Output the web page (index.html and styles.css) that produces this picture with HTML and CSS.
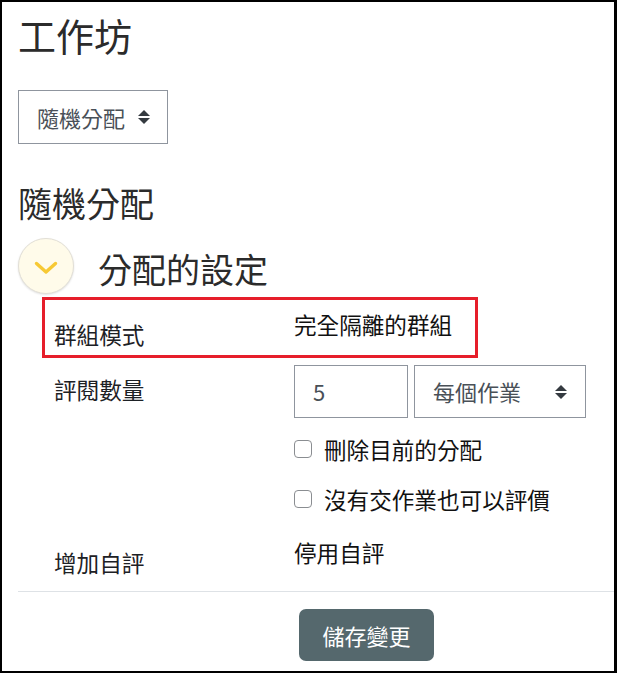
FILE: index.html
```html
<!DOCTYPE html>
<html lang="zh-Hant">
<head>
<meta charset="utf-8">
<title>工作坊</title>
<link rel="stylesheet" href="styles.css">
</head>
<body>
<div class="page">
  <h1 class="title">工作坊</h1>
  <div class="jump">
    <span class="select select-jump">隨機分配<svg class="updown" width="12" height="16" viewBox="0 0 12 16"><polygon points="0,7 6,1 12,7"/><polygon points="0,9 6,15 12,9"/></svg></span>
  </div>
  <h2 class="heading">隨機分配</h2>
  <div class="section-head">
    <span class="toggle"><svg width="24" height="14" viewBox="0 0 24 14"><polyline points="2.5,2.5 12,11 21.5,2.5" fill="none" stroke="#f7c934" stroke-width="3.4" stroke-linecap="round" stroke-linejoin="round"/></svg></span>
    <h3 class="section-title">分配的設定</h3>
  </div>
  <div class="row row-group">
    <div class="label">群組模式</div>
    <div class="value">完全隔離的群組</div>
  </div>
  <div class="row row-count">
    <div class="label">評閱數量</div>
    <div class="controls">
      <span class="field">5</span>
      <span class="select select-per">每個作業<svg class="updown" width="12" height="16" viewBox="0 0 12 16"><polygon points="0,7 6,1 12,7"/><polygon points="0,9 6,15 12,9"/></svg></span>
    </div>
  </div>
  <div class="row row-check">
    <div class="label"></div>
    <label class="check"><span class="box"></span>刪除目前的分配</label>
  </div>
  <div class="row row-check">
    <div class="label"></div>
    <label class="check"><span class="box"></span>沒有交作業也可以評價</label>
  </div>
  <div class="row row-self">
    <div class="label">增加自評</div>
    <div class="value">停用自評</div>
  </div>
  <div class="actions">
    <button class="btn">儲存變更</button>
  </div>
</div>
</body>
</html>
```

FILE: styles.css
```css
html, body {
  margin: 0;
  padding: 0;
  background: #fff;
}

.page {
  width: 617px;
  height: 673px;
  box-sizing: border-box;
  border: 2px solid #000;
  border-right-width: 3px;
  padding: 0 0 0 16px;
  overflow: hidden;
  font-family: "Noto Sans CJK TC", "Noto Sans", sans-serif;
  color: #1d2125;
  font-size: 22.6px;
  line-height: 33px;
}

.title {
  margin: 10px 0 0;
  font-size: 38px;
  line-height: 46px;
  font-weight: 400;
  color: #2b2b2b;
}

.jump {
  margin-top: 32px;
  display: flex;
}

.select {
  display: flex;
  align-items: center;
  box-sizing: border-box;
  border: 1px solid #8f959e;
  color: #495057;
  font-size: 22px;
}

.select-jump {
  width: 150px;
  height: 54px;
  padding-left: 18px;
  gap: 13px;
}

.updown {
  fill: #343a40;
  flex: none;
}

.heading {
  margin: 39px 0 0;
  font-size: 34px;
  line-height: 40px;
  font-weight: 400;
  color: #2b2b2b;
}

.section-head {
  margin-top: 14px;
  display: flex;
  align-items: center;
  gap: 24px;
  height: 57px;
}

.toggle {
  width: 56px;
  height: 56px;
  box-sizing: border-box;
  border-radius: 50%;
  background: #fffbea;
  border: 1px solid #e2dfd6;
  box-shadow: 0 1px 2px rgba(0, 0, 0, 0.12);
  display: flex;
  align-items: center;
  justify-content: center;
  padding-top: 5px;
  flex: none;
}

.section-title {
  margin: 0;
  padding-top: 6px;
  font-size: 34px;
  line-height: 40px;
  font-weight: 400;
  color: #2b2b2b;
}

.row {
  display: grid;
  grid-template-columns: 240px 1fr;
  padding-left: 36px;
}

.row-group {
  margin: 3px 0 0 24px;
  width: 436px;
  height: 61px;
  box-sizing: border-box;
  border: 3px solid #e61e2a;
  padding: 8px 0 0 9px;
}

.row-group .label {
  padding-top: 10px;
}

.value {
  color: #111;
}

.row-count {
  margin-top: 7px;
  height: 53px;
}

.row-count .label {
  padding-top: 8px;
}

.controls {
  display: flex;
  gap: 6px;
}

.field {
  box-sizing: border-box;
  width: 114px;
  height: 53px;
  border: 1px solid #8f959e;
  padding-left: 18px;
  display: flex;
  align-items: center;
  color: #495057;
  font-size: 22px;
}

.select-per {
  width: 172px;
  height: 53px;
  padding: 0 18px 0 18px;
  justify-content: space-between;
}

.row-check {
  height: 50px;
  align-items: center;
}

.row-count + .row-check {
  margin-top: 6px;
}

.check {
  display: flex;
  align-items: center;
  gap: 12px;
  color: #111;
}

.box {
  width: 18px;
  height: 18px;
  box-sizing: border-box;
  border: 1.5px solid #8a8d91;
  border-radius: 4px;
  background: #fff;
  flex: none;
}

.row-self {
  height: 68px;
  box-sizing: border-box;
  border-bottom: 1px solid #dee2e6;
}

.row-self .label {
  padding-top: 22px;
}

.row-self .value {
  padding-top: 12px;
}

.actions {
  padding: 17px 0 0 281px;
}

.btn {
  width: 135px;
  height: 52px;
  border: 0;
  border-radius: 7px;
  background: #55686d;
  color: #fff;
  font-family: "Noto Sans CJK TC", "Noto Sans", sans-serif;
  font-size: 22px;
  padding: 0;
}
```
